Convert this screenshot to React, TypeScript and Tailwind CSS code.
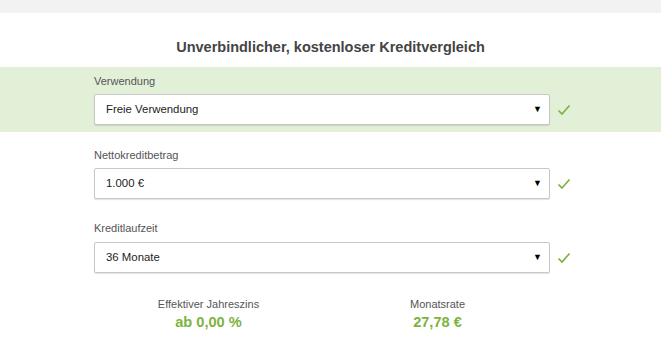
function Check() {
  return (
    <svg width="14" height="12" viewBox="0 0 14 12" className="shrink-0">
      <path d="M1.5 6.5 L5 10 L12.5 1.5" fill="none" stroke="#7cb342" strokeWidth="1.7" />
    </svg>
  );
}

function Field({ value }: { value: string }) {
  return (
    <div className="flex items-center gap-[7px]">
      <div className="flex h-[31px] w-[456px] items-center justify-between rounded-[2px] border border-[#c8c8c8] bg-white pl-[11px] pr-[7px] text-[11.4px] text-[#222] shadow-[0_1px_1px_rgba(0,0,0,0.12)]">
        <span>{value}</span>
        <span className="text-[9px] text-black">▼</span>
      </div>
      <Check />
    </div>
  );
}

export default function App() {
  return (
    <div className="h-[349px] w-full overflow-hidden bg-white font-['Liberation_Sans',Arial,sans-serif]">
      <div className="h-[13px] bg-[#f2f2f2]" />
      <h1 className="pt-[26px] pb-[12px] text-center text-[14.5px] leading-[16px] font-bold text-[#444]">
        Unverbindlicher, kostenloser Kreditvergleich
      </h1>

      <div className="bg-[#e3f0d8] pt-[7px] pb-[7px]">
        <div className="pl-[94px]">
          <div className="mb-[6px] text-[11px] leading-[14px] text-[#555]">Verwendung</div>
          <Field value="Freie Verwendung" />
        </div>
      </div>

      <div className="pl-[94px] pt-[16px]">
        <div className="mb-[6px] text-[11px] leading-[14px] text-[#555]">Nettokreditbetrag</div>
        <Field value="1.000 €" />
        <div className="mt-[22px] mb-[7px] text-[11px] leading-[14px] text-[#555]">Kreditlaufzeit</div>
        <Field value="36 Monate" />
      </div>

      <div className="mt-[24px] ml-[94px] grid w-[458px] grid-cols-2">
        <div className="text-center">
          <div className="text-[11px] leading-[14px] text-[#555]">Effektiver Jahreszins</div>
          <div className="mt-[3px] text-[14.6px] leading-[16px] font-bold text-[#7cb342]">ab 0,00 %</div>
        </div>
        <div className="text-center">
          <div className="text-[11px] leading-[14px] text-[#555]">Monatsrate</div>
          <div className="mt-[3px] text-[14.6px] leading-[16px] font-bold text-[#7cb342]">27,78 €</div>
        </div>
      </div>
    </div>
  );
}
